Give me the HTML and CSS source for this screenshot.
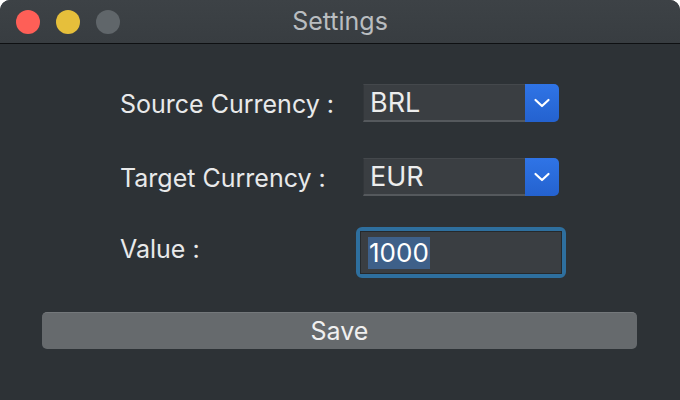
FILE: index.html
```html
<!DOCTYPE html>
<html>
<head>
<meta charset="utf-8">
<link rel="stylesheet" href="styles.css">
</head>
<body>
<div class="window">
  <div class="titlebar">
    <div class="lights">
      <span class="light red"></span>
      <span class="light yellow"></span>
      <span class="light gray"></span>
    </div>
    <div class="title">Settings</div>
  </div>
  <div class="content">
    <div class="row row-source">
      <div class="label">Source Currency :</div>
      <div class="select">
        <div class="select-value">BRL</div>
        <div class="select-btn">
          <svg width="18" height="10" viewBox="0 0 18 10"><path d="M2.5 2 L9 8 L15.5 2" fill="none" stroke="#fff" stroke-width="2.2" stroke-linecap="round" stroke-linejoin="round"/></svg>
        </div>
      </div>
    </div>
    <div class="row row-target">
      <div class="label">Target Currency :</div>
      <div class="select">
        <div class="select-value">EUR</div>
        <div class="select-btn">
          <svg width="18" height="10" viewBox="0 0 18 10"><path d="M2.5 2 L9 8 L15.5 2" fill="none" stroke="#fff" stroke-width="2.2" stroke-linecap="round" stroke-linejoin="round"/></svg>
        </div>
      </div>
    </div>
    <div class="row row-value">
      <div class="label">Value :</div>
      <div class="field-ring">
        <div class="field"><span class="selected">1000</span></div>
      </div>
    </div>
    <div class="save">Save</div>
  </div>
</div>
</body>
</html>
```
FILE: styles.css
```css
html, body {
  margin: 0;
  padding: 0;
  background: #ffffff;
}
body {
  width: 680px;
  height: 400px;
  overflow: hidden;
  font-family: Inter, "Noto Sans", sans-serif;
}
.window {
  width: 680px;
  height: 400px;
  background: #2d3236;
  border-radius: 10px 10px 0 0;
  overflow: hidden;
  display: flex;
  flex-direction: column;
}
.titlebar {
  height: 43px;
  flex: none;
  background: linear-gradient(#3d4246, #383d41);
  border-bottom: 1px solid #0e1012;
  position: relative;
  display: flex;
  align-items: center;
  justify-content: center;
}
.lights {
  position: absolute;
  left: 16px;
  top: 10px;
  display: flex;
  gap: 16px;
}
.light {
  width: 24px;
  height: 24px;
  border-radius: 50%;
  display: block;
}
.red { background: #fe5f57; }
.yellow { background: #e6bf3b; }
.gray { background: #60666a; }
.title {
  color: #b9bdc0;
  font-size: 25px;
  margin-top: -1px;
}
.content {
  flex: 1;
  display: flex;
  flex-direction: column;
  padding-top: 40px;
}
.row {
  display: flex;
  align-items: center;
  padding-left: 120px;
}
.label {
  width: 243px;
  flex: none;
  color: #e8e9ea;
  font-size: 25px;
  margin-top: 1px;
}
.row-target { margin-top: 36px; }
.row-value { margin-top: 31px; }
.row-value .label { width: 236px; margin-top: -8px; }
.select {
  width: 196px;
  height: 38px;
  display: flex;
  box-sizing: border-box;
}
.select-value {
  flex: 1;
  background: #3a3e42;
  border-top: 1px solid #44484c;
  border-left: 1px solid #32363a;
  border-bottom: 2px solid #55595d;
  color: #eceded;
  font-size: 27px;
  display: flex;
  align-items: center;
  padding-left: 6px;
}
.select-btn {
  width: 34px;
  flex: none;
  background: linear-gradient(#2f74e6, #2462cf);
  border-radius: 0 5px 5px 0;
  display: flex;
  align-items: center;
  justify-content: center;
}
.field-ring {
  width: 210px;
  height: 51px;
  box-sizing: border-box;
  border: 4px solid #2e6f9e;
  border-radius: 6px;
  padding: 0;
}
.field {
  height: 100%;
  box-sizing: border-box;
  background: #3a3e42;
  border: 1px solid #25292c;
  display: flex;
  align-items: center;
  padding-left: 7px;
}
.selected {
  background: #3e6089;
  color: #ffffff;
  font-size: 26px;
  line-height: 32px;
  padding: 0 1px;
}
.save {
  margin: 34px 43px 0 42px;
  height: 37px;
  background: #666a6d;
  border-top: 1px solid #74787b;
  box-sizing: border-box;
  border-radius: 5px;
  color: #f0f0f0;
  font-size: 25px;
  display: flex;
  align-items: center;
  justify-content: center;
}
```
